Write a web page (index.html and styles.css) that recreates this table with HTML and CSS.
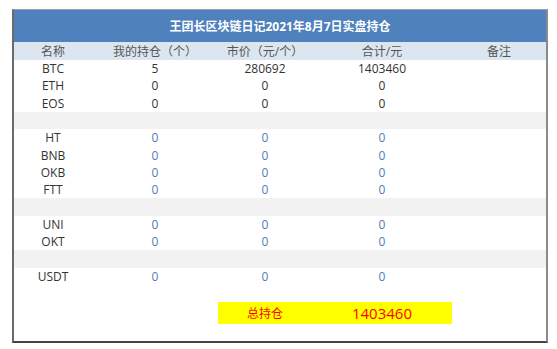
FILE: index.html
```html
<!DOCTYPE html>
<html lang="zh-CN">
<head>
<meta charset="utf-8">
<title>持仓</title>
<link rel="stylesheet" href="styles.css">
</head>
<body>
<div class="frame">
  <div class="title">王团长区块链日记2021年8月7日实盘持仓</div>
  <div class="row head">
    <div>名称</div><div>我的持仓（个）</div><div>市价（元/个）</div><div>合计/元</div><div>备注</div>
  </div>
  <div class="row"><div>BTC</div><div>5</div><div>280692</div><div>1403460</div><div></div></div>
  <div class="row"><div>ETH</div><div>0</div><div>0</div><div>0</div><div></div></div>
  <div class="row"><div>EOS</div><div>0</div><div>0</div><div>0</div><div></div></div>
  <div class="row sep"></div>
  <div class="row blue"><div>HT</div><div>0</div><div>0</div><div>0</div><div></div></div>
  <div class="row blue"><div>BNB</div><div>0</div><div>0</div><div>0</div><div></div></div>
  <div class="row blue"><div>OKB</div><div>0</div><div>0</div><div>0</div><div></div></div>
  <div class="row blue"><div>FTT</div><div>0</div><div>0</div><div>0</div><div></div></div>
  <div class="row sep"></div>
  <div class="row blue"><div>UNI</div><div>0</div><div>0</div><div>0</div><div></div></div>
  <div class="row blue"><div>OKT</div><div>0</div><div>0</div><div>0</div><div></div></div>
  <div class="row sep"></div>
  <div class="row blue"><div>USDT</div><div>0</div><div>0</div><div>0</div><div></div></div>
  <div class="total-line">
    <div class="total">
      <div class="total-label">总持仓</div>
      <div class="total-value">1403460</div>
    </div>
  </div>
</div>
</body>
</html>
```
FILE: styles.css
```css
html, body {
  margin: 0;
  padding: 0;
  background: #ffffff;
}
body {
  font-family: "Open Sans", "Noto Sans CJK SC", sans-serif;
  font-size: 12px;
  color: #333333;
}
.frame {
  margin: 9px 0 0 12px;
  width: 532px;
  height: 331px;
  border-top: 1px solid #a0a0a0;
  border-left: 2px solid #6a6a6a;
  border-right: 2px solid #8a8a8a;
  border-bottom: 2px solid #454545;
  display: flex;
  flex-direction: column;
}
.title {
  height: 32px;
  background: #4f81bd;
  color: #ffffff;
  font-weight: bold;
  font-size: 12px;
  display: flex;
  align-items: center;
  justify-content: center;
}
.row {
  display: grid;
  grid-template-columns: 78px 126px 94px 140px 94px;
  height: 17.3px;
  align-items: center;
  text-align: center;
  line-height: 17px;
  color: #333333;
}
.row.head {
  height: 18px;
  background: #dce6f1;
  color: #555555;
}
.row.sep {
  background: #f2f2f2;
}
.row.blue div:first-child {
  color: #333333;
}
.row.blue div {
  color: #4f7db5;
}
.total-line {
  display: grid;
  grid-template-columns: 204px 234px;
  padding-top: 17px;
}
.total {
  grid-column: 2;
  height: 22px;
  background: #ffff00;
  color: #ff0000;
  display: grid;
  grid-template-columns: 94px 140px;
  align-items: center;
  text-align: center;
}
.total-label {
  font-size: 12px;
}
.total-value {
  font-size: 15px;
}
```
